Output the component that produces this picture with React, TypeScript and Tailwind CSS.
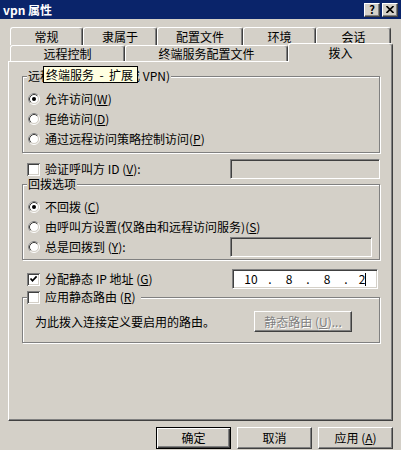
import React from "react";

const Radio = ({ on }: { on?: boolean }) => (
  <svg width="12" height="12" viewBox="0 0 12 12" className="shrink-0">
    <circle cx="6" cy="6" r="5.5" fill="none" stroke="#fff" />
    <path d="M2.11 9.89A5.5 5.5 0 0 1 9.89 2.11" fill="none" stroke="#808080" />
    <circle cx="6" cy="6" r="4.5" fill="#fff" stroke="#d4d0c8" />
    <path d="M2.82 9.18A4.5 4.5 0 0 1 9.18 2.82" fill="none" stroke="#404040" />
    {on && <circle cx="6" cy="6" r="2" fill="#000" />}
  </svg>
);

const Check = ({ on }: { on?: boolean }) => (
  <svg width="13" height="13" viewBox="0 0 13 13" className="shrink-0">
    <rect x="0" y="0" width="13" height="13" fill="#808080" />
    <rect x="1" y="1" width="12" height="12" fill="#fff" />
    <rect x="1" y="1" width="11" height="11" fill="#404040" />
    <rect x="2" y="2" width="10" height="10" fill="#d4d0c8" />
    <rect x="2" y="2" width="9" height="9" fill="#fff" />
    {on && <path d="M3.5 5.5 L5.5 7.8 L9.6 3.4" fill="none" stroke="#000" strokeWidth="1.7" />}
  </svg>
);

const Tab = ({ label, className }: { label: string; className: string }) => (
  <div
    className={`flex items-center justify-center border-t border-l border-white border-r border-r-[#404040] rounded-t-[3px] shadow-[inset_-1px_0_0_#808080] ${className}`}
  >
    {label}
  </div>
);

const Sunken = ({ className, children }: { className: string; children?: React.ReactNode }) => (
  <div
    className={`border border-t-[#808080] border-l-[#808080] border-r-white border-b-white shadow-[inset_1px_1px_0_#404040,inset_-1px_-1px_0_#d4d0c8] ${className}`}
  >
    {children}
  </div>
);

const Key = ({ k }: { k: string }) => (
  <>
    (<u className="underline">{k}</u>)
  </>
);

const Octet = ({ v }: { v: string }) => <div className="w-[34px] text-center">{v}</div>;
const Dot = () => <div className="w-[4px] text-center">.</div>;

export default function App() {
  return (
    <div className="w-[401px] h-[450px] bg-[#d4d0c8] overflow-hidden flex flex-col text-[12px] leading-[14px] text-black font-['Noto_Sans_CJK_SC',sans-serif]">
      {/* title bar */}
      <div className="h-[19px] bg-[#0a246a] flex items-center justify-between pl-[3px] pr-[3px]">
        <span className="text-white font-bold text-[12px]">vpn 属性</span>
        <div className="flex gap-[2px]">
          <div className="w-[16px] h-[14px] bg-[#d4d0c8] border border-t-white border-l-white border-r-[#404040] border-b-[#404040] shadow-[inset_-1px_-1px_0_#808080] flex items-center justify-center font-bold text-[11px] leading-none">
            ?
          </div>
          <div className="w-[16px] h-[14px] bg-[#d4d0c8] border border-t-white border-l-white border-r-[#404040] border-b-[#404040] shadow-[inset_-1px_-1px_0_#808080] flex items-center justify-center">
            <svg width="8" height="7" viewBox="0 0 8 7">
              <path d="M0.5 0 L7.5 7 M7.5 0 L0.5 7" stroke="#000" strokeWidth="1.6" />
            </svg>
          </div>
        </div>
      </div>

      {/* tabs */}
      <div className="mt-[8px] ml-[10px] flex h-[18px]">
        <Tab label="常规" className="w-[73px]" />
        <Tab label="隶属于" className="w-[74px]" />
        <Tab label="配置文件" className="w-[86px]" />
        <Tab label="环境" className="w-[73px]" />
        <Tab label="会话" className="w-[75px]" />
      </div>
      <div className="ml-[10px] flex h-[16px]">
        <Tab label="远程控制" className="w-[115px] h-[16px] bg-[#d4d0c8]" />
        <Tab label="终端服务配置文件" className="w-[163px] h-[16px] bg-[#d4d0c8]" />
        <Tab label="拨入" className="w-[105px] h-[19px] -mt-[2px] relative z-10 bg-[#d4d0c8]" />
      </div>

      {/* page */}
      <div className="relative ml-[8px] w-[385px] h-[360px] shrink-0 border border-t-white border-l-white border-r-[#404040] border-b-[#404040] shadow-[inset_-1px_-1px_0_#808080] flex flex-col pl-[13px]">
        <div className="absolute left-[34px] top-[4px] w-[95px] h-[17px] bg-[#ffffe1] border border-black flex items-center pl-[2px] z-20 whitespace-pre">
          终端服务  -  扩展
        </div>

        {/* group 1 */}
        <div className="mt-[14px] w-[358px] border border-[#808080] shadow-[inset_1px_1px_0_#fff,1px_1px_0_#fff] flex flex-col pb-[3px]">
          <span className="-mt-[8px] ml-[4px] px-[1px] self-start bg-[#d4d0c8] h-[14px]">
            远程访问权限(拨入或 VPN)
          </span>
          <div className="mt-[6px] h-[20px] flex items-center gap-[5px] pl-[5px]">
            <Radio on />
            <span>
              允许访问<Key k="W" />
            </span>
          </div>
          <div className="h-[20px] flex items-center gap-[5px] pl-[5px]">
            <Radio />
            <span>
              拒绝访问<Key k="D" />
            </span>
          </div>
          <div className="h-[20px] flex items-center gap-[5px] pl-[5px]">
            <Radio />
            <span>
              通过远程访问策略控制访问<Key k="P" />
            </span>
          </div>
        </div>

        {/* verify caller id */}
        <div className="mt-[6px] w-[358px] h-[20px] flex items-center gap-[5px] pl-[5px]">
          <Check />
          <span>
            验证呼叫方 ID <Key k="V" />:
          </span>
          <Sunken className="ml-auto w-[150px] h-[20px]" />
        </div>

        {/* group 2 */}
        <div className="mt-[5px] w-[358px] border border-[#808080] shadow-[inset_1px_1px_0_#fff,1px_1px_0_#fff] flex flex-col pb-[2px]">
          <span className="-mt-[8px] ml-[4px] px-[1px] self-start bg-[#d4d0c8] h-[14px]">回拨选项</span>
          <div className="mt-[6px] h-[20px] flex items-center gap-[5px] pl-[5px]">
            <Radio on />
            <span>
              不回拨 <Key k="C" />
            </span>
          </div>
          <div className="h-[20px] flex items-center gap-[5px] pl-[5px]">
            <Radio />
            <span>
              由呼叫方设置(仅路由和远程访问服务)<Key k="S" />
            </span>
          </div>
          <div className="h-[20px] flex items-center gap-[5px] pl-[5px]">
            <Radio />
            <span>
              总是回拨到 <Key k="Y" />:
            </span>
            <Sunken className="ml-auto mr-[7px] w-[142px] h-[20px]" />
          </div>
        </div>

        {/* static ip */}
        <div className="mt-[9px] w-[358px] h-[20px] flex items-center gap-[5px] pl-[5px]">
          <Check on />
          <span>
            分配静态 IP 地址 <Key k="G" />
          </span>
          <Sunken className="ml-auto mr-[2px] w-[146px] h-[20px] bg-white flex items-center pl-[1px]">
            <Octet v="10" />
            <Dot />
            <Octet v="8" />
            <Dot />
            <Octet v="8" />
            <Dot />
            <div className="flex-1 flex justify-center items-center">
              <span>2</span>
              <span className="w-[1px] h-[13px] bg-black" />
            </div>
          </Sunken>
        </div>

        {/* group 3 */}
        <div className="mt-[8px] w-[358px] border border-[#808080] shadow-[inset_1px_1px_0_#fff,1px_1px_0_#fff] flex flex-col pb-[10px]">
          <div className="-mt-[8px] ml-[4px] pr-[6px] self-start bg-[#d4d0c8] h-[14px] flex items-center gap-[5px]">
            <Check />
            <span>
              应用静态路由 <Key k="R" />
            </span>
          </div>
          <div className="mt-[7px] h-[21px] flex items-center pl-[12px]">
            <span>为此拨入连接定义要启用的路由。</span>
            <div className="ml-auto mr-[27px] w-[98px] h-[21px] border border-t-white border-l-white border-r-[#404040] border-b-[#404040] shadow-[inset_-1px_-1px_0_#808080] flex items-center justify-center text-[#808080] [text-shadow:1px_1px_0_#fff]">
              <span>
                静态路由 <Key k="U" />...
              </span>
            </div>
          </div>
        </div>
      </div>

      {/* dialog buttons */}
      <div className="mt-[6px] flex justify-end gap-[6px] pr-[8px]">
        <div className="w-[75px] h-[22px] border border-black shadow-[inset_1px_1px_0_#fff,inset_-1px_-1px_0_#404040,inset_-2px_-2px_0_#808080] flex items-center justify-center">
          确定
        </div>
        <div className="w-[75px] h-[22px] border border-t-white border-l-white border-r-[#404040] border-b-[#404040] shadow-[inset_-1px_-1px_0_#808080] flex items-center justify-center">
          取消
        </div>
        <div className="w-[75px] h-[22px] border border-t-white border-l-white border-r-[#404040] border-b-[#404040] shadow-[inset_-1px_-1px_0_#808080] flex items-center justify-center">
          <span>
            应用 <Key k="A" />
          </span>
        </div>
      </div>
    </div>
  );
}
